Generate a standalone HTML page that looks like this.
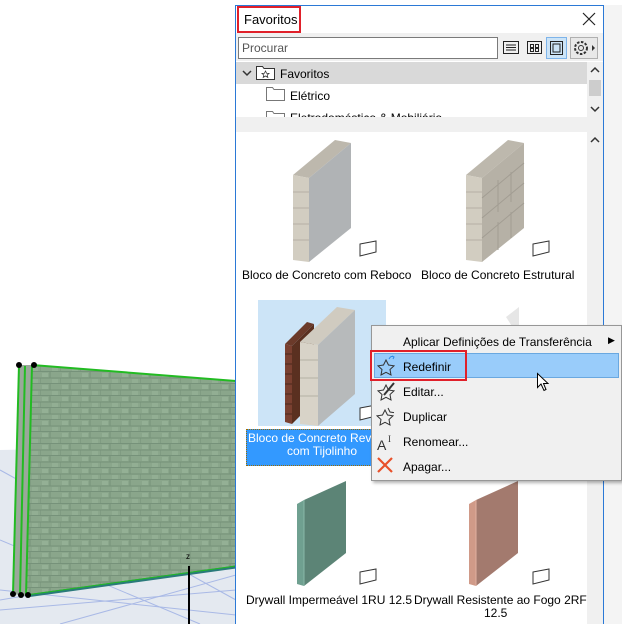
<!DOCTYPE html>
<html><head><style>
*{margin:0;padding:0;box-sizing:border-box}
body{width:622px;height:624px;position:relative;overflow:hidden;background:#fff;font-family:"Liberation Sans",sans-serif;font-size:12px;color:#000}
.a{position:absolute}
.t{position:absolute;white-space:nowrap}
</style></head><body>
<svg class="a" style="left:0;top:0" width="236" height="624">
<defs><pattern id="br" width="20" height="12" patternUnits="userSpaceOnUse"><rect width="20" height="12" fill="#8aa68b"/><path d="M0 11.5H20M10 0V6M0 6H20M0 6V12" stroke="#76927a" stroke-width="1" fill="none"/><rect x="2" y="1" width="6" height="4" fill="#94b095"/><rect x="12" y="7" width="6" height="4" fill="#92ae93"/></pattern></defs>
<polygon points="0,450 236,445 236,624 0,624" fill="#e4e9f0"/>
<g stroke="#a9b9e6" stroke-width="1">
<line x1="0" y1="470" x2="236" y2="600"/><line x1="0" y1="540" x2="200" y2="624"/><line x1="0" y1="600" x2="236" y2="560"/><line x1="0" y1="610" x2="236" y2="590"/><line x1="0" y1="590" x2="236" y2="615"/><line x1="60" y1="624" x2="236" y2="575"/>
</g>
<polygon points="32,365 236,381 236,568 26,596" fill="url(#br)"/>
<polygon points="19,365 32,365 26,596 13,594" fill="#9aa89a"/>
<polyline points="19,365 13,594" stroke="#22bb22" stroke-width="2" fill="none"/>
<polyline points="25,366 20,595" stroke="#22bb22" stroke-width="2" fill="none"/>
<polyline points="32,365 26,596" stroke="#22bb22" stroke-width="2" fill="none"/>
<polyline points="32,365 236,381" stroke="#22bb22" stroke-width="2" fill="none"/>
<polyline points="26,596 236,567" stroke="#2a7a7a" stroke-width="3" fill="none"/>
<polyline points="26,595 236,566" stroke="#22bb22" stroke-width="1" fill="none"/>
<circle cx="19" cy="365" r="3"/><circle cx="34" cy="365" r="3"/><circle cx="13" cy="594" r="3"/><circle cx="21" cy="595" r="3"/><circle cx="28" cy="595" r="3"/>
<line x1="189" y1="566" x2="189" y2="624" stroke="#000" stroke-width="2"/>
<text x="186" y="559" font-size="8" font-family="Liberation Sans">z</text>
</svg>
<div class="a" style="left:235px;top:5px;width:369px;height:619px;background:#fff;border:1px solid #2b79d6;border-bottom:none"></div>
<div class="a" style="left:604px;top:5px;width:18px;height:619px;background:#f4f4f4"></div>
<div class="t" style="left:244px;top:12px;font-size:13px">Favoritos</div>
<div class="a" style="left:237px;top:6px;width:64px;height:27px;border:2px solid #e0202a"></div>
<svg class="a" style="left:582px;top:12px" width="14" height="14"><path d="M1 1L13 13M13 1L1 13" stroke="#222" stroke-width="1.2"/></svg>
<div class="a" style="left:236px;top:33px;width:367px;height:28px;background:#f0f0f0"></div>
<div class="a" style="left:238px;top:37px;width:260px;height:22px;background:#fff;border:1px solid #7a7a7a"></div>
<div class="t" style="left:242px;top:41px;color:#555">Procurar</div>
<svg class="a" style="left:502px;top:37px" width="98" height="22">
<rect x="1.5" y="4.5" width="15" height="12" fill="none" stroke="#222"/><path d="M4 8H14M4 10.5H14M4 13H14" stroke="#222"/>
<rect x="25.5" y="4.5" width="14" height="12" fill="none" stroke="#222"/><rect x="28.5" y="7.5" width="3" height="3" fill="none" stroke="#222"/><rect x="33.5" y="7.5" width="3" height="3" fill="none" stroke="#222"/><rect x="28.5" y="11.5" width="3" height="3" fill="none" stroke="#222"/><rect x="33.5" y="11.5" width="3" height="3" fill="none" stroke="#222"/>
<rect x="44.5" y="0.5" width="20" height="21" fill="#cce4f7" stroke="#7eb4ea"/><rect x="48.5" y="4.5" width="12" height="13" fill="none" stroke="#222"/><rect x="51" y="7" width="7" height="8" fill="none" stroke="#222"/>
<rect x="68.5" y="0.5" width="27" height="21" fill="#e8e8e8" stroke="#b0b0b0"/><circle cx="79" cy="11" r="6" fill="none" stroke="#333" stroke-dasharray="2.5 1.5" stroke-width="2"/><circle cx="79" cy="11" r="2.5" fill="none" stroke="#333"/><path d="M90 8L93 11L90 14Z" fill="#333"/>
</svg>
<div class="a" style="left:236px;top:62px;width:351px;height:22px;background:#d9d9d9"></div>
<div class="a" style="left:587px;top:62px;width:16px;height:65px;background:#f0f0f0"></div>
<div class="a" style="left:589px;top:80px;width:12px;height:16px;background:#cdcdcd"></div>
<svg class="a" style="left:590px;top:66px" width="10" height="50"><path d="M1 6L5 2 9 6M1 41L5 45 9 41" stroke="#333" stroke-width="1.5" fill="none"/></svg>
<svg class="a" style="left:242px;top:70px" width="10" height="8"><path d="M1 1L5 5 9 1" stroke="#333" stroke-width="1.5" fill="none"/></svg>
<svg class="a" style="left:256px;top:64px" width="20" height="16"><path d="M0.5 2.5H6.5L8 4.5H18.5V15.5H0.5Z" fill="#fff" stroke="#333"/><path d="M9.5 7L10.6 9.3 13 9.5 11.2 11 11.8 13.4 9.5 12 7.2 13.4 7.8 11 6 9.5 8.4 9.3Z" fill="none" stroke="#333" stroke-width=".8"/></svg>
<div class="t" style="left:280px;top:67px">Favoritos</div>
<svg class="a" style="left:266px;top:86px" width="20" height="16"><path d="M0.5 1.5H6.5L8 3.5H18.5V14.5H0.5Z" fill="#fff" stroke="#777"/></svg>
<div class="t" style="left:290px;top:89px">Elétrico</div>
<div class="a" style="left:236px;top:106px;width:351px;height:11px;overflow:hidden"><svg class="a" style="left:30px;top:4px" width="20" height="10"><path d="M0.5 1.5H6.5L8 3.5H18.5V14.5H0.5Z" fill="#fff" stroke="#777"/></svg><div class="t" style="left:54px;top:5px">Eletrodoméstico &amp; Mobiliário</div></div>
<div class="a" style="left:236px;top:117px;width:351px;height:10px;background:#f0f0f0"></div>
<div class="a" style="left:236px;top:127px;width:367px;height:5px;background:#f0f0f0"></div>
<div class="a" style="left:587px;top:132px;width:16px;height:492px;background:#f0f0f0"></div>
<svg class="a" style="left:590px;top:136px" width="10" height="8"><path d="M1 6L5 2 9 6" stroke="#333" stroke-width="1.5" fill="none"/></svg>
<svg class="a" style="left:236px;top:132px" width="351" height="492">
<polygon points="57,43 73,46 115,11 99,8" fill="#bdb8ad"/>
<polygon points="57,43 73,46 73,130 57,128" fill="#d2cdc1"/>
<path d="M57 60H73M57 76H73M57 92H73M57 108H73" stroke="#b5b0a5"/>
<polygon points="73,46 115,11 115,96 73,130" fill="#b0b3b5"/>
<polygon points="124,112 140,109 140,120 124,124" fill="#fff" stroke="#333"/>
<polygon points="230,43 246,46 288,11 272,8" fill="#bdb8ad"/>
<polygon points="230,43 246,46 246,130 230,128" fill="#d2cdc1"/>
<path d="M230 60H246M230 76H246M230 92H246M230 108H246" stroke="#b5b0a5"/>
<polygon points="246,46 288,11 288,96 246,130" fill="#b6b1a6"/>
<path d="M246 66L288 31M246 86L288 51M246 106L288 71M262 48V80M275 40V70M262 90V118M275 80V106" stroke="#a29d93"/>
<polygon points="297,112 313,109 313,120 297,124" fill="#fff" stroke="#333"/>
<rect x="22" y="168" width="128" height="126" fill="#cce4f7"/>
<polygon points="49,212 56,214 78,192 71,190" fill="#6b3a2a"/>
<polygon points="49,212 56,214 56,292 49,290" fill="#7a4030"/>
<path d="M49 222H56M49 232H56M49 242H56M49 252H56M49 262H56M49 272H56M49 282H56" stroke="#4a281c"/>
<polygon points="56,214 78,192 78,270 56,292" fill="#5a3020"/>
<polygon points="64,210 82,213 119,178 101,175" fill="#d0cbc0"/>
<polygon points="64,210 82,213 82,294 64,292" fill="#d8d3c8"/>
<path d="M64 228H82M64 246H82M64 264H82" stroke="#b5b0a5"/>
<polygon points="82,213 119,178 119,262 82,294" fill="#b7babb"/>
<polygon points="124,276 140,273 140,284 124,288" fill="#fff" stroke="#333"/>
<polygon points="270,185 283,175 283,205" fill="#e6e6e6"/>
<polygon points="61,372 68,368 68,454 61,452" fill="#6fa090"/>
<polygon points="68,368 110,349 110,421 68,454" fill="#5c8476"/>
<line x1="68" y1="368" x2="68" y2="454" stroke="#88b8a8"/>
<polygon points="124,440 140,437 140,448 124,452" fill="#fff" stroke="#333"/>
<polygon points="233,372 240,368 240,454 233,452" fill="#d09a88"/>
<polygon points="240,368 282,349 282,421 240,454" fill="#a37a6e"/>
<line x1="240" y1="368" x2="240" y2="454" stroke="#e0b0a0"/>
<polygon points="297,440 313,437 313,448 297,452" fill="#fff" stroke="#333"/>
</svg>
<div class="t" style="left:242px;top:268px">Bloco de Concreto com Reboco</div>
<div class="t" style="left:421px;top:268px">Bloco de Concreto Estrutural</div>
<div class="a" style="left:246px;top:429px;width:140px;height:37px;background:#3399ff;border:1px dotted #9a6a00"></div>
<div class="t" style="left:248px;top:431px;color:#fff">Bloco de Concreto Revestido</div>
<div class="t" style="left:287px;top:444px;color:#fff">com Tijolinho</div>
<div class="t" style="left:246px;top:593px">Drywall Impermeável 1RU 12.5</div>
<div class="t" style="left:414px;top:593px">Drywall Resistente ao Fogo 2RF</div>
<div class="t" style="left:484px;top:606px">12.5</div>
<div class="a" style="left:371px;top:325px;width:251px;height:156px;background:#f0f0f0;border:1px solid #979797;box-shadow:2px 2px 3px rgba(0,0,0,.3)"></div>
<div class="t" style="left:403px;top:335px">Aplicar Definições de Transferência</div>
<div class="t" style="left:608px;top:335px;font-size:9px">▶</div>
<div class="a" style="left:374px;top:353px;width:245px;height:25px;background:#99ccfa;border:1px solid #6aa8e0"></div>
<div class="t" style="left:403px;top:360px">Redefinir</div>
<div class="a" style="left:370px;top:350px;width:97px;height:31px;border:2px solid #e0202a"></div>
<svg class="a" style="left:374px;top:353px" width="30" height="126">
<path d="M12 7L14.5 12 20 12.8 16 16.5 17 22 12 19.3 7 22 8 16.5 4 12.8 9.5 12Z" fill="none" stroke="#333"/>
<path d="M15 6Q17 2 20 4M18 3L20 4 19 6" stroke="#2a8ae8" fill="none"/>
<path d="M12 32L14.5 37 20 37.8 16 41.5 17 47 12 44.3 7 47 8 41.5 4 37.8 9.5 37Z" fill="none" stroke="#333"/>
<path d="M10 42L20 30" stroke="#333" stroke-width="2"/>
<path d="M11 57L13.5 62 19 62.8 15 66.5 16 72 11 69.3 6 72 7 66.5 3 62.8 8.5 62Z" fill="none" stroke="#333"/>
<path d="M14 55L16 59 20 59.6" fill="none" stroke="#333"/>
<text x="3" y="97" font-size="14" font-family="Liberation Sans" fill="#333">A</text><text x="14" y="89" font-size="9" font-family="Liberation Serif" fill="#333">I</text>
<path d="M4 105L18 119M18 105L4 119" stroke="#e8502a" stroke-width="2.2"/>
</svg>
<div class="t" style="left:403px;top:385px">Editar...</div>
<div class="t" style="left:403px;top:410px">Duplicar</div>
<div class="t" style="left:403px;top:435px">Renomear...</div>
<div class="t" style="left:403px;top:460px">Apagar...</div>
<svg class="a" style="left:536px;top:372px" width="14" height="20"><path d="M1.5 1.5V15.5L5 12 8 18.5 10 17.5 7.5 11.5 12 11.5Z" fill="#fff" stroke="#000"/></svg>
</body></html>
